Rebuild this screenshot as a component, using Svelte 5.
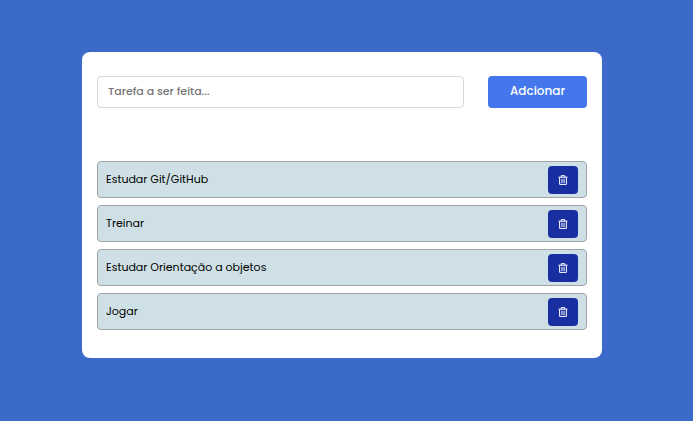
<script>
  let tasks = $state(['Estudar Git/GitHub', 'Treinar', 'Estudar Orientação a objetos', 'Jogar']);
  let draft = $state('');

  function add(event) {
    event.preventDefault();
    const text = draft.trim();
    if (!text) return;
    tasks.push(text);
    draft = '';
  }

  function remove(index) {
    tasks.splice(index, 1);
  }
</script>

<main>
  <section class="card">
    <form onsubmit={add}>
      <input type="text" aria-label="Tarefa" placeholder="Tarefa a ser feita..." bind:value={draft} />
      <button class="add" type="submit">Adcionar</button>
    </form>
    <ul>
      {#each tasks as task, i}
        <li>
          <span>{task}</span>
          <button class="remove" type="button" aria-label="Remover tarefa" onclick={() => remove(i)}>
            <svg viewBox="0 0 10 10" width="10" height="10" fill="none" stroke="currentColor" aria-hidden="true">
              <path d="M0.5 2.2H9.5M3.2 2V0.7H6.8V2M1.6 2.4V9.4H8.4V2.4" />
              <path d="M3.7 3.8V8M5 3.8V8M6.3 3.8V8" stroke-width="0.7" />
            </svg>
          </button>
        </li>
      {/each}
    </ul>
  </section>
</main>

<style>
  :global(body) {
    margin: 0;
    background: #3b6aca;
  }

  main {
    padding: 52px 91px 63px 82px;
    font-family: Poppins, Inter, sans-serif;
  }

  .card {
    padding: 24px 15px 28px;
    background: #fff;
    border-radius: 8px;
  }

  form {
    display: flex;
    gap: 24px;
    margin-bottom: 53px;
  }

  input,
  .add {
    box-sizing: border-box;
    height: 32px;
    border-radius: 4px;
    font-family: inherit;
    font-weight: 500;
  }

  input {
    flex: 1;
    min-width: 0;
    padding: 0 10px 2px;
    border: 1px solid #d6d6d6;
    background: #fff;
    color: #111;
    font-size: 11px;
  }

  input::placeholder {
    color: #757575;
    opacity: 1;
  }

  .add {
    padding: 0 22px 2px;
    border: 0;
    background: #4477eb;
    color: #fff;
    font-size: 12px;
    cursor: pointer;
  }

  ul {
    display: flex;
    flex-direction: column;
    gap: 7px;
    margin: 0;
    padding: 0;
    list-style: none;
  }

  li {
    display: flex;
    align-items: center;
    justify-content: space-between;
    padding: 4px 8px 3px;
    border: 1px solid #9ea5a7;
    border-radius: 4px;
    background: #cee0e5;
    color: #000;
    font-size: 11px;
    line-height: 16px;
  }

  li span {
    padding-bottom: 2px;
  }

  .remove {
    display: flex;
    align-items: center;
    justify-content: center;
    width: 30px;
    height: 28px;
    padding: 0;
    border: 0;
    border-radius: 4px;
    background: #182fa2;
    color: #fff;
    cursor: pointer;
  }
</style>
